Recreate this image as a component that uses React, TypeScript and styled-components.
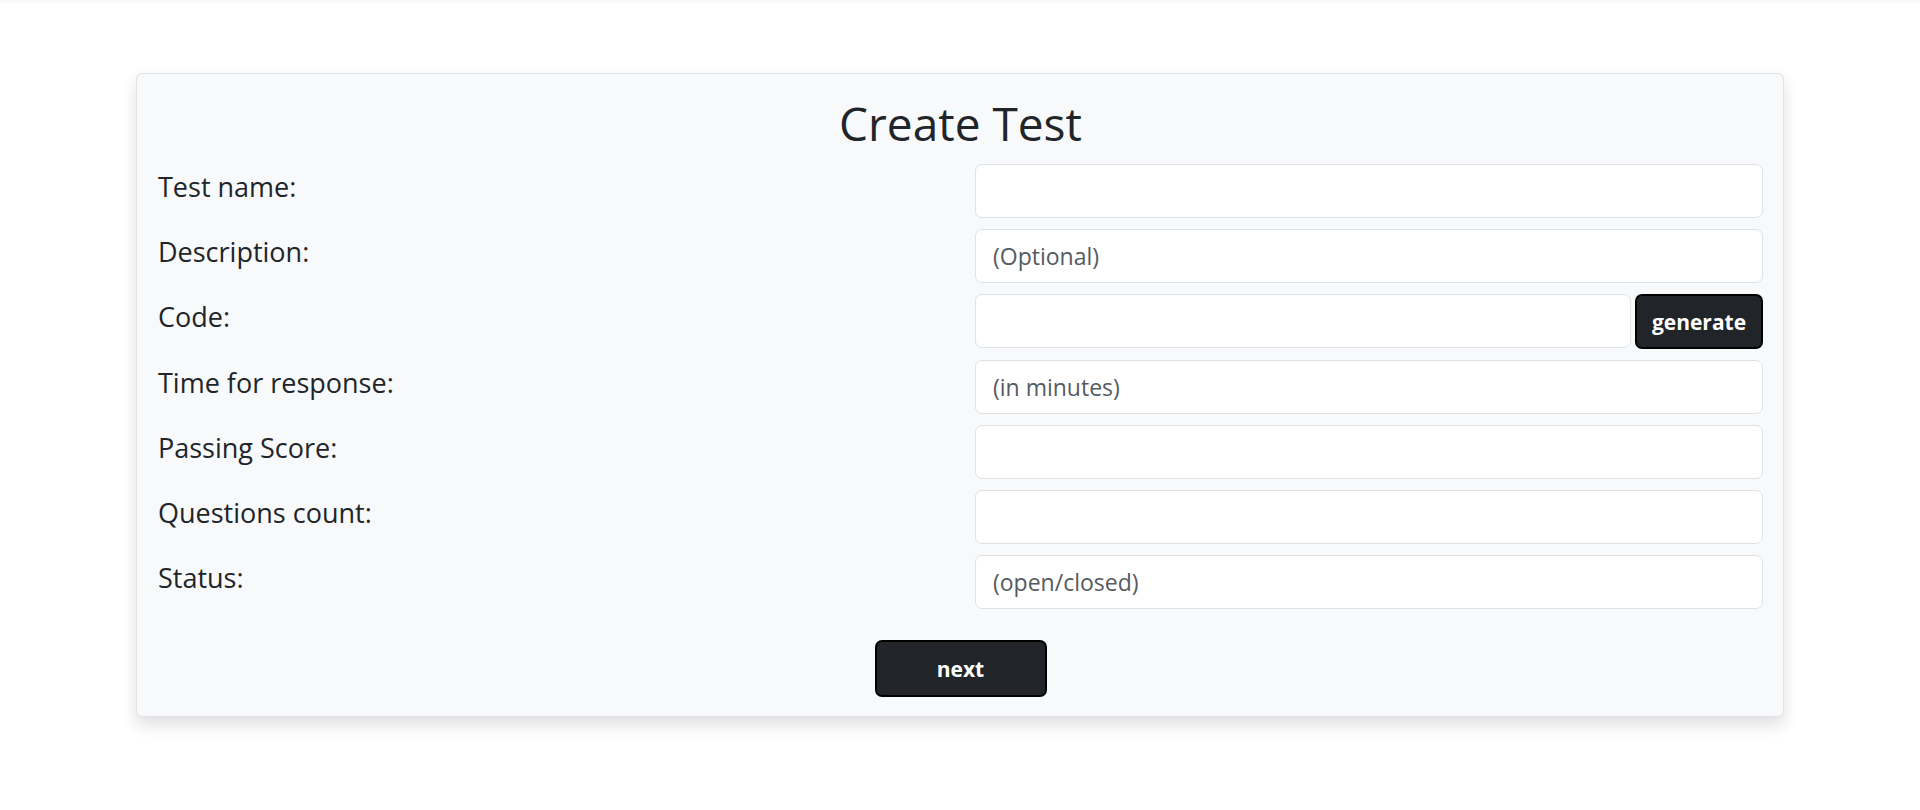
import React from "react";
import styled, { createGlobalStyle } from "styled-components";

const GlobalStyle = createGlobalStyle`
  html, body {
    margin: 0;
    padding: 0;
    background: #ffffff;
    font-family: "Open Sans", Lato, sans-serif;
    color: #212529;
  }
  * { box-sizing: border-box; }
`;

const TopShade = styled.div`
  height: 4px;
  background: linear-gradient(#f7f7f7, #ffffff);
`;

const Page = styled.main`
  padding: 69px 136px 40px;
`;

const Card = styled.form`
  background: #f8f9fa;
  border: 1px solid #dee2e6;
  border-radius: 6px;
  box-shadow: 0 8px 16px rgba(0, 0, 0, 0.13);
  padding: 22px 20px 19px 21px;
  display: flex;
  flex-direction: column;
`;

const Title = styled.h2`
  margin: 0 0 13px;
  text-align: center;
  font-size: 46px;
  font-weight: 500;
  line-height: 1.2;
  color: #212529;
`;

const Fields = styled.div`
  display: flex;
  flex-direction: column;
  gap: 11px;
`;

const Row = styled.div`
  display: grid;
  grid-template-columns: 1fr 1fr;
  column-gap: 29px;
  align-items: start;
`;

const Label = styled.label`
  padding-top: 3px;
  font-size: 27px;
  line-height: 1.5;
  font-weight: 500;
  color: #212529;
`;

const Control = styled.div`
  display: flex;
  gap: 4px;
`;

const Input = styled.input`
  flex: 1;
  min-width: 0;
  height: 54px;
  padding: 0 17px;
  font-family: "Open Sans", Lato, sans-serif;
  font-size: 23px;
  color: #212529;
  background: #ffffff;
  border: 1px solid #dee2e6;
  border-radius: 7px;
  outline: none;
  &::placeholder {
    color: #555b61;
  }
`;

const DarkButton = styled.button<{ $wide?: boolean }>`
  height: ${(p) => (p.$wide ? "57px" : "55px")};
  width: ${(p) => (p.$wide ? "172px" : "128px")};
  flex: none;
  background: #212529;
  color: #ffffff;
  border: 2px solid #000000;
  border-radius: 7px;
  font-family: "Open Sans", Lato, sans-serif;
  font-size: 21px;
  font-weight: 700;
  cursor: pointer;
`;

const Footer = styled.div`
  display: flex;
  justify-content: center;
  margin-top: 31px;
`;

const fields: { label: string; placeholder?: string; generate?: boolean }[] = [
  { label: "Test name:" },
  { label: "Description:", placeholder: "(Optional)" },
  { label: "Code:", generate: true },
  { label: "Time for response:", placeholder: "(in minutes)" },
  { label: "Passing Score:" },
  { label: "Questions count:" },
  { label: "Status:", placeholder: "(open/closed)" },
];

export default function App() {
  return (
    <>
      <GlobalStyle />
      <TopShade />
      <Page>
        <Card onSubmit={(e) => e.preventDefault()}>
          <Title>Create Test</Title>
          <Fields>
            {fields.map((f) => (
              <Row key={f.label}>
                <Label>{f.label}</Label>
                <Control>
                  <Input placeholder={f.placeholder} />
                  {f.generate && <DarkButton type="button">generate</DarkButton>}
                </Control>
              </Row>
            ))}
          </Fields>
          <Footer>
            <DarkButton $wide type="submit">
              next
            </DarkButton>
          </Footer>
        </Card>
      </Page>
    </>
  );
}
